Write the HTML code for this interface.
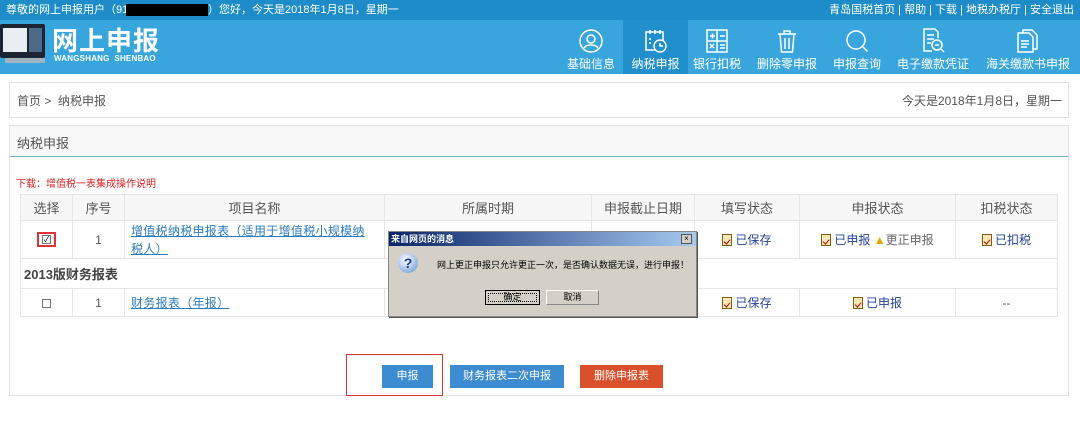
<!DOCTYPE html>
<html><head><meta charset="utf-8"><style>
*{margin:0;padding:0;box-sizing:border-box}
body{width:1080px;height:446px;background:#fff;font-family:"Liberation Sans","Noto Sans CJK SC",sans-serif;position:relative;overflow:hidden;color:#333}
.a{position:absolute}
.top{left:0;top:0;width:1080px;height:20px;background:#1d8cc8;color:#fff;font-size:11px;line-height:20px}
.hdr{left:0;top:20px;width:1080px;height:54px;background:#38a6dc}
.nav{top:20px;height:54px;text-align:center;color:#fff;font-size:12px}
.nav svg{position:absolute;top:8px;left:50%;margin-left:-13px}
.nav span{position:absolute;bottom:2px;left:0;right:0;white-space:nowrap}
.box{border:1px solid #e3e3e3}
table{border-collapse:collapse;position:absolute;left:20px;top:194px;width:1038px;font-size:12px}
td,th{border:1px solid #e6e6e6;text-align:center;font-weight:normal;color:#555}
th{height:26px;background:#f7f7f7;font-size:13px}
.lk{color:#2a7bbf;text-decoration:underline;text-align:left;padding-left:6px;padding-right:10px;font-size:12px;letter-spacing:0.3px}
.st{color:#22449b;font-size:12px}
.ic{display:inline-block;width:10px;height:12px;border:1px solid #8a5a10;background:#f6e7b8;vertical-align:-2px;margin-right:3px;position:relative}
.ic:after{content:"";position:absolute;left:2px;top:3px;width:3px;height:5px;border:solid #c00;border-width:0 1.5px 1.5px 0;transform:rotate(40deg)}
.btn{top:365px;height:23px;color:#fff;font-size:11px;text-align:center;line-height:23px}
.cb{display:inline-block;width:9px;height:9px;border:1px solid #777;background:#fff;position:relative;vertical-align:middle}
</style></head><body>
<div class="a top"><span style="position:absolute;left:6px">尊敬的网上申报用户（913</span><span class="a" style="left:126px;top:4px;width:82px;height:12px;background:#000"></span><span style="position:absolute;left:208px">）您好，今天是2018年1月8日，星期一</span>
<span style="position:absolute;right:6px">青岛国税首页 | 帮助 | 下载 | 地税办税厅 | 安全退出</span></div>
<div class="a hdr"></div>
<div class="a" style="left:0;top:24px;width:45px;height:34px;background:#1b2430;border-radius:2px"></div>
<div class="a" style="left:3px;top:28px;width:24px;height:24px;background:#e8eef2"></div>
<div class="a" style="left:29px;top:28px;width:13px;height:24px;background:#4b6a85"></div>
<div class="a" style="left:5px;top:58px;width:40px;height:5px;background:#9fb3c0"></div>
<div class="a" style="left:52px;top:21px;color:#fff;font-size:26px;font-weight:bold;letter-spacing:1px;font-family:'Noto Sans CJK SC',sans-serif">网上申报</div>
<div class="a" style="left:54px;top:54px;color:#fff;font-size:8px;font-weight:bold;letter-spacing:0.2px">WANGSHANG&nbsp;&nbsp;SHENBAO</div>
<div class="a" style="left:623px;top:20px;width:65px;height:54px;background:#218fcb"></div>
<div class="a nav" style="left:560px;width:62px"><svg width="26" height="26" viewBox="0 0 26 26" fill="none" stroke="#fff" stroke-width="1.5"><circle cx="13" cy="13" r="11"/><circle cx="13" cy="11" r="4"/><path d="M6 20c2-4 12-4 14 0"/></svg><span>基础信息</span></div>
<div class="a nav" style="left:623px;width:65px"><svg width="26" height="26" viewBox="0 0 26 26" fill="none" stroke="#fff" stroke-width="1.5"><rect x="3" y="4" width="17" height="18"/><path d="M7 2v4M12 2v4M17 2v4M6 11h2M6 15h2"/><circle cx="17" cy="18" r="6" fill="#218fcb"/><path d="M17 15v3h3"/></svg><span>纳税申报</span></div>
<div class="a nav" style="left:688px;width:58px"><svg width="26" height="26" viewBox="0 0 26 26" fill="none" stroke="#fff" stroke-width="1.5"><rect x="3" y="2" width="20" height="22"/><path d="M3 13h20M13 2v22M6 8h5M8.5 5.5v5M16 8h5M6 16l4 4M10 16l-4 4M16 17h5M16 20h5"/></svg><span>银行扣税</span></div>
<div class="a nav" style="left:750px;width:74px"><svg width="26" height="26" viewBox="0 0 26 26" fill="none" stroke="#fff" stroke-width="1.5"><path d="M4 6h18M10 6V3h6v3M6 6l1.5 18h11L20 6M11 10v11M15 10v11"/></svg><span>删除零申报</span></div>
<div class="a nav" style="left:826px;width:62px"><svg width="26" height="26" viewBox="0 0 26 26" fill="none" stroke="#fff" stroke-width="1.5"><circle cx="12" cy="12" r="9"/><path d="M18.5 18.5l5 5"/></svg><span>申报查询</span></div>
<div class="a nav" style="left:893px;width:80px"><svg width="26" height="26" viewBox="0 0 26 26" fill="none" stroke="#fff" stroke-width="1.5"><path d="M18 10V4l-3-3H4v22h8"/><path d="M7 7h7M7 11h7M7 15h4"/><circle cx="17" cy="17" r="5"/><path d="M21 21l3 3M15 17h4"/></svg><span>电子缴款凭证</span></div>
<div class="a nav" style="left:980px;width:96px"><svg width="26" height="26" viewBox="0 0 26 26" fill="none" stroke="#fff" stroke-width="1.5"><path d="M8 5V2h9l5 5v14h-4"/><path d="M3 5h11l4 4v15H3z"/><path d="M6 13h8M6 16h8M6 19h6"/></svg><span>海关缴款书申报</span></div>

<div class="a box" style="left:9px;top:82px;width:1060px;height:36px"></div>
<div class="a" style="left:17px;top:92px;font-size:12px;color:#555">首页 &gt;&nbsp; 纳税申报</div>
<div class="a" style="right:18px;top:92px;font-size:12px;color:#555">今天是2018年1月8日，星期一</div>
<div class="a box" style="left:9px;top:125px;width:1060px;height:271px;border-bottom:1px solid #e3e3e3"></div>
<div class="a" style="left:10px;top:126px;width:1058px;height:31px;background:#f8f8f8;border-bottom:1px solid #6fb3c2"></div>
<div class="a" style="left:17px;top:133px;font-size:13px;color:#555">纳税申报</div>
<div class="a" style="left:16px;top:175px;font-size:10px;color:#d22">下载：增值税一表集成操作说明</div>
<table>
<tr><th style="width:52px">选择</th><th style="width:52px">序号</th><th style="width:260px">项目名称</th><th style="width:207px">所属时期</th><th style="width:103px">申报截止日期</th><th style="width:105px">填写状态</th><th style="width:156px">申报状态</th><th>扣税状态</th></tr>
<tr style="height:38px"><td><span style="display:inline-block;width:19px;height:15px;border:2px solid #d33;line-height:9px;padding-top:1px"><span class="cb" style="font-size:8px;line-height:7px;color:#000">✓</span></span></td><td>1</td><td class="lk" style="line-height:18px">增值税纳税申报表（适用于增值税小规模纳税人）</td><td></td><td></td><td class="st"><i class="ic"></i>已保存</td><td class="st"><i class="ic"></i>已申报 <span style="color:#e0a800">▲</span><span style="color:#666">更正申报</span></td><td class="st"><i class="ic"></i>已扣税</td></tr>
<tr style="height:30px"><td colspan="8" style="text-align:left;padding-left:3px;font-weight:bold;font-size:13px;color:#444">2013版财务报表</td></tr>
<tr style="height:28px"><td><span class="cb"></span></td><td>1</td><td class="lk">财务报表（年报）</td><td></td><td></td><td class="st"><i class="ic"></i>已保存</td><td class="st"><i class="ic"></i>已申报</td><td>--</td></tr>
</table>

<div class="a" style="left:388px;top:231px;width:309px;height:86px;background:#d4d0c8;border:1px solid #888;box-shadow:1px 1px 0 #555"></div>
<div class="a" style="left:389px;top:232px;width:307px;height:14px;background:linear-gradient(90deg,#0a246a,#a6caf0);color:#fff;font-size:9px;font-weight:bold;line-height:14px;padding-left:2px">来自网页的消息</div>
<div class="a" style="left:681px;top:234px;width:11px;height:10px;background:#d4d0c8;border:1px solid #555;font-size:8px;line-height:8px;text-align:center;color:#000">×</div>
<div class="a" style="left:398px;top:253px;width:20px;height:20px;border-radius:50%;background:radial-gradient(circle at 40% 35%,#fff,#5a8fd6);color:#1b3c8c;font-weight:bold;font-size:14px;text-align:center;line-height:20px">?</div>
<div class="a" style="left:437px;top:258px;font-size:9px;color:#000">网上更正申报只允许更正一次，是否确认数据无误，进行申报！</div>
<div class="a" style="left:485px;top:290px;width:55px;height:15px;border:1px solid #000;background:#d4d0c8;font-size:9px;text-align:center;line-height:13px;color:#000;outline:1px dotted #000;outline-offset:-4px">确定</div>
<div class="a" style="left:546px;top:290px;width:53px;height:15px;border:1px solid #888;border-top-color:#fff;border-left-color:#fff;background:#d4d0c8;font-size:9px;text-align:center;line-height:13px;color:#000">取消</div>

<div class="a" style="left:346px;top:354px;width:97px;height:42px;border:1.5px solid #d33"></div>
<div class="a btn" style="left:382px;width:51px;background:#3d8bd0">申报</div>
<div class="a btn" style="left:450px;width:114px;background:#3d8bd0">财务报表二次申报</div>
<div class="a btn" style="left:580px;width:83px;background:#d9502a">删除申报表</div>
</body></html>
